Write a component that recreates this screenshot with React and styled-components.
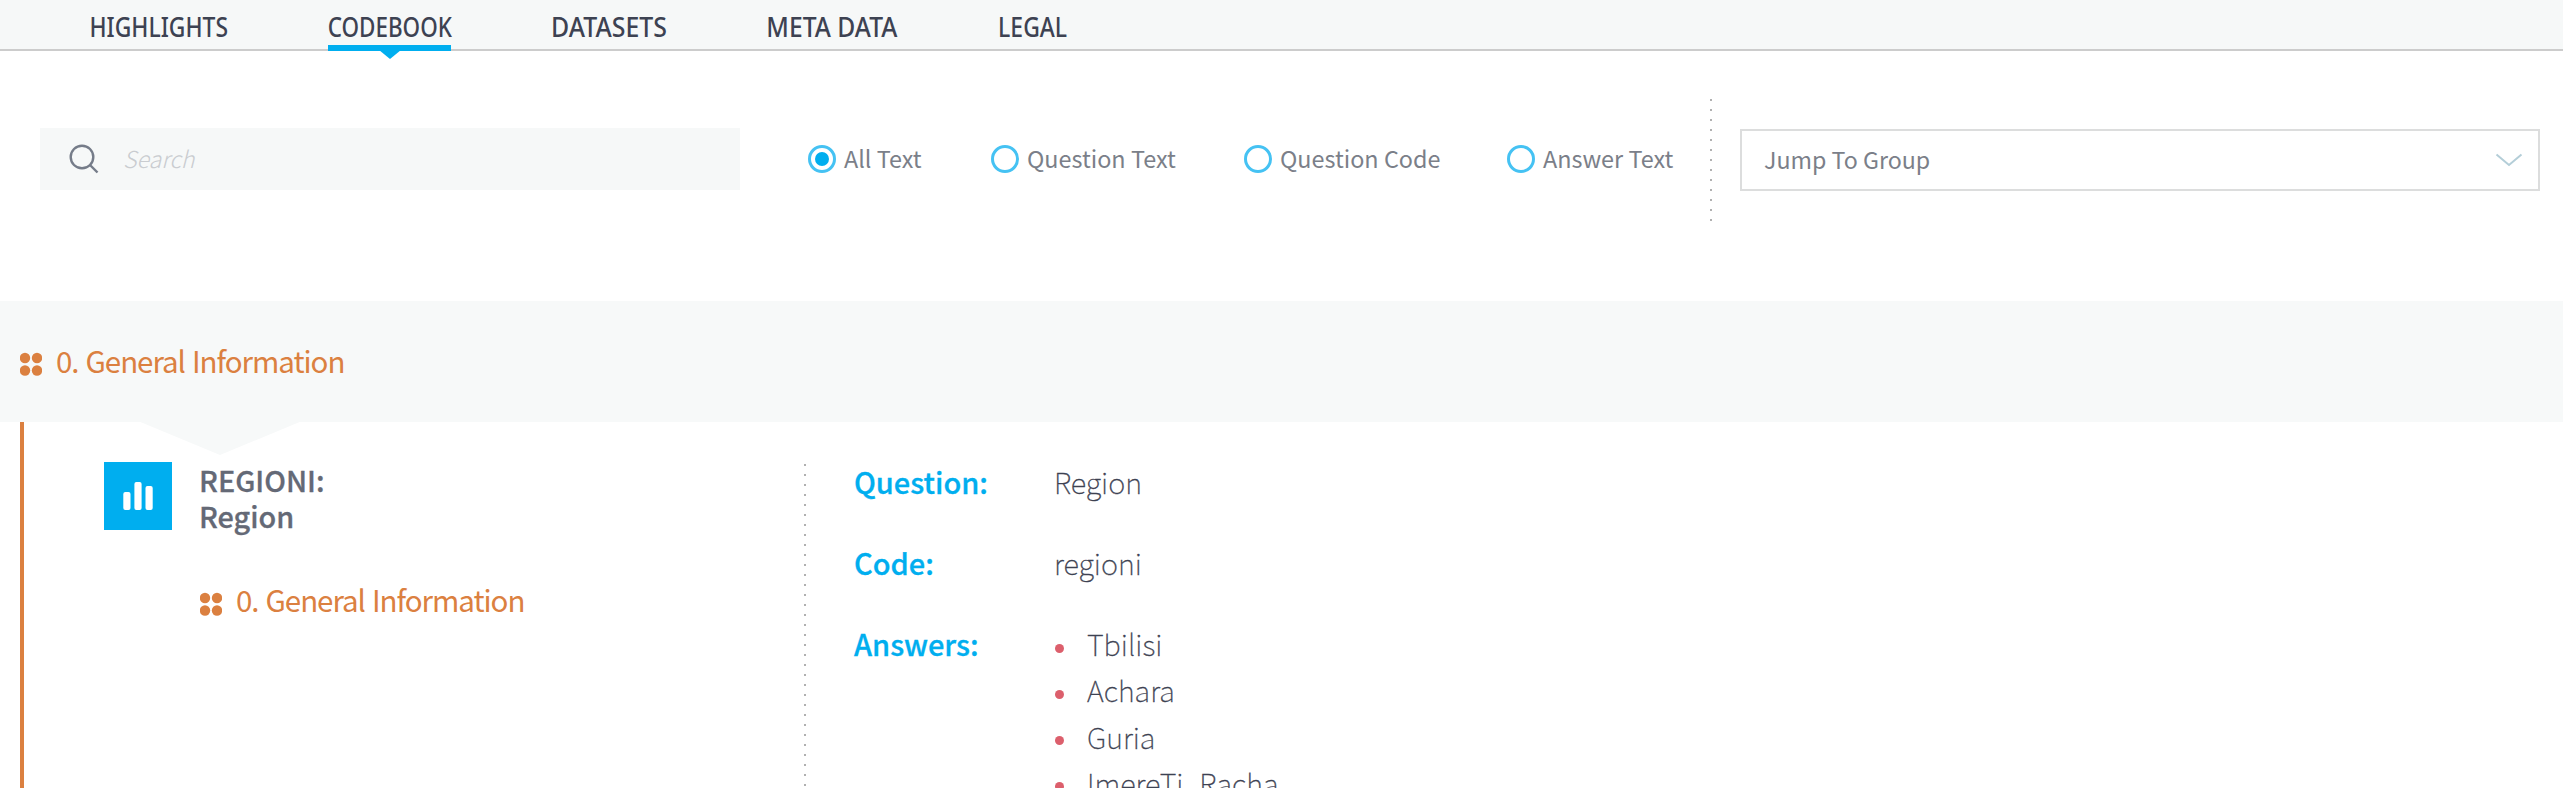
import React from 'react';
import styled, { createGlobalStyle } from 'styled-components';

const GlobalStyle = createGlobalStyle`
  * { box-sizing: border-box; }
  html, body, #root { margin: 0; height: 100%; overflow: hidden; }
  body { background: #fff; font-family: "Noto Sans CJK SC", sans-serif; }
  ul { list-style: none; margin: 0; padding: 0; }
`;

const Page = styled.div`
  height: 788px;
  overflow: hidden;
  display: flex;
  flex-direction: column;
`;

const Nav = styled.nav`
  flex: none;
  display: flex;
  gap: 100px;
  height: 51px;
  padding-left: 90px;
  background: #f6f8f8;
  border-bottom: 2px solid #cccccc;
`;

const Tab = styled.a`
  position: relative;
  display: flex;
  justify-content: center;
  width: ${(p) => p.$width}px;
  height: 51px;
  font: 500 27px/51px "Noto Sans", sans-serif;
  padding-top: 1px;
  color: #3d4252;
  white-space: nowrap;
  ${(p) => p.$active && `
    border-bottom: 6px solid #00aeef;
    &::after {
      content: "";
      position: absolute;
      left: 50%;
      top: 50px;
      margin-left: -11px;
      border: solid transparent;
      border-width: 9px 11px 0;
      border-top-color: #00aeef;
    }
  `}
`;

const TabLabel = styled.span`
  transform: scaleX(${(p) => p.$squeeze});
`;

const Filters = styled.section`
  flex: none;
  display: flex;
  align-items: flex-start;
  height: 250px;
  padding: 48px 23px 0 40px;
  color: #7b7f89;
`;

const SearchBox = styled.label`
  display: flex;
  align-items: center;
  width: 700px;
  height: 62px;
  margin-top: 29px;
  padding-left: 29px;
  background: #f6f8f8;
`;

const SearchInput = styled.input`
  flex: 1;
  margin-left: 24px;
  padding: 0 0 2px;
  border: 0;
  outline: 0;
  background: none;
  font: italic 300 23.2px/34px "Noto Sans CJK SC", sans-serif;
  &::placeholder { color: #c9ccd0; opacity: 1; }
`;

const RadioGroup = styled.div`
  display: flex;
  width: 970px;
  height: 62px;
  margin-top: 29px;
  padding-left: 68px;
`;

const RadioOption = styled.label`
  flex: none;
  display: flex;
  align-items: center;
  width: ${(p) => p.$width}px;
  font-size: 23.4px;
  line-height: 34px;
  white-space: nowrap;
`;

const RadioCircle = styled.span`
  display: grid;
  place-items: center;
  width: 28px;
  height: 28px;
  margin-right: 8px;
  border: 3px solid #45c2f3;
  border-radius: 50%;
  &::after {
    content: "";
    width: 14px;
    height: 14px;
    border-radius: 50%;
    background: ${(p) => (p.$checked ? '#00aeef' : 'transparent')};
  }
`;

const RadioText = styled.span`
  padding-bottom: 2px;
`;

const DottedLine = styled.div`
  flex: none;
  width: 2px;
  height: ${(p) => p.$height}px;
  margin-top: ${(p) => p.$top || 0}px;
  background: repeating-linear-gradient(to bottom, #b0b0b0 0 2px, transparent 2px 10px);
`;

const Select = styled.button`
  flex: 1;
  display: flex;
  align-items: center;
  justify-content: space-between;
  height: 62px;
  margin: 30px 0 0 28px;
  padding: 0 15px 0 22px;
  border: 2px solid #dcdddd;
  background: #fff;
  color: inherit;
  font: 400 23.2px/34px "Noto Sans CJK SC", sans-serif;
`;

const SelectText = styled.span`
  padding-bottom: 2px;
`;

const GroupHeader = styled.header`
  flex: none;
  position: relative;
  display: flex;
  align-items: center;
  height: 121px;
  padding-left: 20px;
  background: #f7f9f9;
  &::after {
    content: "";
    position: absolute;
    left: 138px;
    top: 120px;
    border: solid transparent;
    border-width: 34px 82px 0;
    border-top-color: #f7f9f9;
  }
`;

const GroupLink = styled.a`
  display: flex;
  align-items: center;
  gap: 14px;
  color: #db8040;
  font-size: 29.5px;
  line-height: 40px;
  letter-spacing: -1.04px;
  word-spacing: 1.5px;
  white-space: nowrap;
`;

const GroupIcon = styled.svg`
  flex: none;
  margin-top: 6px;
`;

const GroupName = styled.span`
  height: 40px;
  margin-top: -4px;
`;

const Entry = styled.article`
  flex: 1;
  display: flex;
  margin-left: 20px;
  padding: 40px 0 0 80px;
  border-left: 4px solid #db8040;
`;

const ChartTile = styled.div`
  flex: none;
  display: grid;
  place-items: center;
  width: 68px;
  height: 68px;
  background: #00aeef;
`;

const Summary = styled.div`
  flex: none;
  width: 632px;
  padding-left: 28px;
`;

const Title = styled.h2`
  margin: 0 0 49px -1px;
  font-size: 28.8px;
  font-weight: 500;
  line-height: 36px;
  color: #646976;
  -webkit-text-stroke: 0.3px currentColor;
`;

const Details = styled.dl`
  display: grid;
  grid-template-columns: 200px 1fr;
  align-content: start;
  row-gap: 41px;
  margin: -1px 0 0 48px;
  font-size: 29px;
  line-height: 40px;
`;

const Term = styled.dt`
  color: #00aeef;
  font-weight: 500;
  -webkit-text-stroke: 0.3px currentColor;
`;

const Value = styled.dd`
  margin: 0;
  color: #3d4252;
  font-weight: 100;
  -webkit-text-stroke: 0.35px currentColor;
`;

const Answer = styled.li`
  display: flex;
  align-items: center;
  height: 40px;
  margin-bottom: 6.3px;
  white-space: nowrap;
  &::before {
    content: "";
    width: 9px;
    height: 9px;
    margin: 10px 23px 0 1px;
    border-radius: 50%;
    background: #dc5f6c;
  }
`;

const tabs = [
  { label: 'HIGHLIGHTS', width: 138, squeeze: 0.848 },
  { label: 'CODEBOOK', width: 123, squeeze: 0.83 },
  { label: 'DATASETS', width: 115, squeeze: 0.92 },
  { label: 'META DATA', width: 132, squeeze: 0.912 },
  { label: 'LEGAL', width: 69, squeeze: 0.85 },
];

const scopes = [
  { label: 'All Text', width: 183 },
  { label: 'Question Text', width: 253 },
  { label: 'Question Code', width: 263 },
  { label: 'Answer Text', width: 170 },
];

const answers = ['Tbilisi', 'Achara', 'Guria', 'ImereTi_Racha'];

function Group() {
  return (
    <GroupLink>
      <GroupIcon width="22" height="25" viewBox="0 0 22 25" fill="currentColor">
        <circle cx="5" cy="6" r="5.2" />
        <circle cx="17" cy="6" r="5.2" />
        <circle cx="5" cy="18.5" r="5.2" />
        <circle cx="17" cy="18.5" r="5.2" />
      </GroupIcon>
      <GroupName>0. General Information</GroupName>
    </GroupLink>
  );
}

export default function App() {
  return (
    <Page>
      <GlobalStyle />
      <Nav>
        {tabs.map((t) => (
          <Tab key={t.label} $width={t.width} $active={t.label === 'CODEBOOK'}>
            <TabLabel $squeeze={t.squeeze}>{t.label}</TabLabel>
          </Tab>
        ))}
      </Nav>
      <Filters>
        <SearchBox>
          <svg width="30" height="30" viewBox="0 0 30 30" fill="none" stroke="#757c89" strokeWidth="2.4">
            <circle cx="13" cy="13" r="11.3" />
            <path d="M20.5 20.5 28.5 28.5" />
          </svg>
          <SearchInput placeholder="Search" />
        </SearchBox>
        <RadioGroup>
          {scopes.map((s, i) => (
            <RadioOption key={s.label} $width={s.width}>
              <RadioCircle $checked={i === 0} />
              <RadioText>{s.label}</RadioText>
            </RadioOption>
          ))}
        </RadioGroup>
        <DottedLine $height={122} />
        <Select>
          <SelectText>Jump To Group</SelectText>
          <svg width="28" height="14" viewBox="0 0 28 14" fill="none" stroke="#b4ced8" strokeWidth="2">
            <path d="M1.5 1.5 14 12 26.5 1.5" />
          </svg>
        </Select>
      </Filters>
      <GroupHeader>
        <Group />
      </GroupHeader>
      <Entry>
        <ChartTile>
          <svg width="30" height="28" viewBox="0 0 30 28" fill="#fff">
            <rect x="0.3" y="10" width="7.2" height="18" rx="2" />
            <rect x="11.4" y="0" width="7.2" height="28" rx="2" />
            <rect x="22.5" y="4" width="7.2" height="24" rx="2" />
          </svg>
        </ChartTile>
        <Summary>
          <Title>
            REGIONI:
            <br />
            Region
          </Title>
          <Group />
        </Summary>
        <DottedLine $height={330} $top={2} />
        <Details>
          <Term>Question:</Term>
          <Value>Region</Value>
          <Term>Code:</Term>
          <Value>regioni</Value>
          <Term>Answers:</Term>
          <Value>
            <ul>
              {answers.map((a) => (
                <Answer key={a}>{a}</Answer>
              ))}
            </ul>
          </Value>
        </Details>
      </Entry>
    </Page>
  );
}
